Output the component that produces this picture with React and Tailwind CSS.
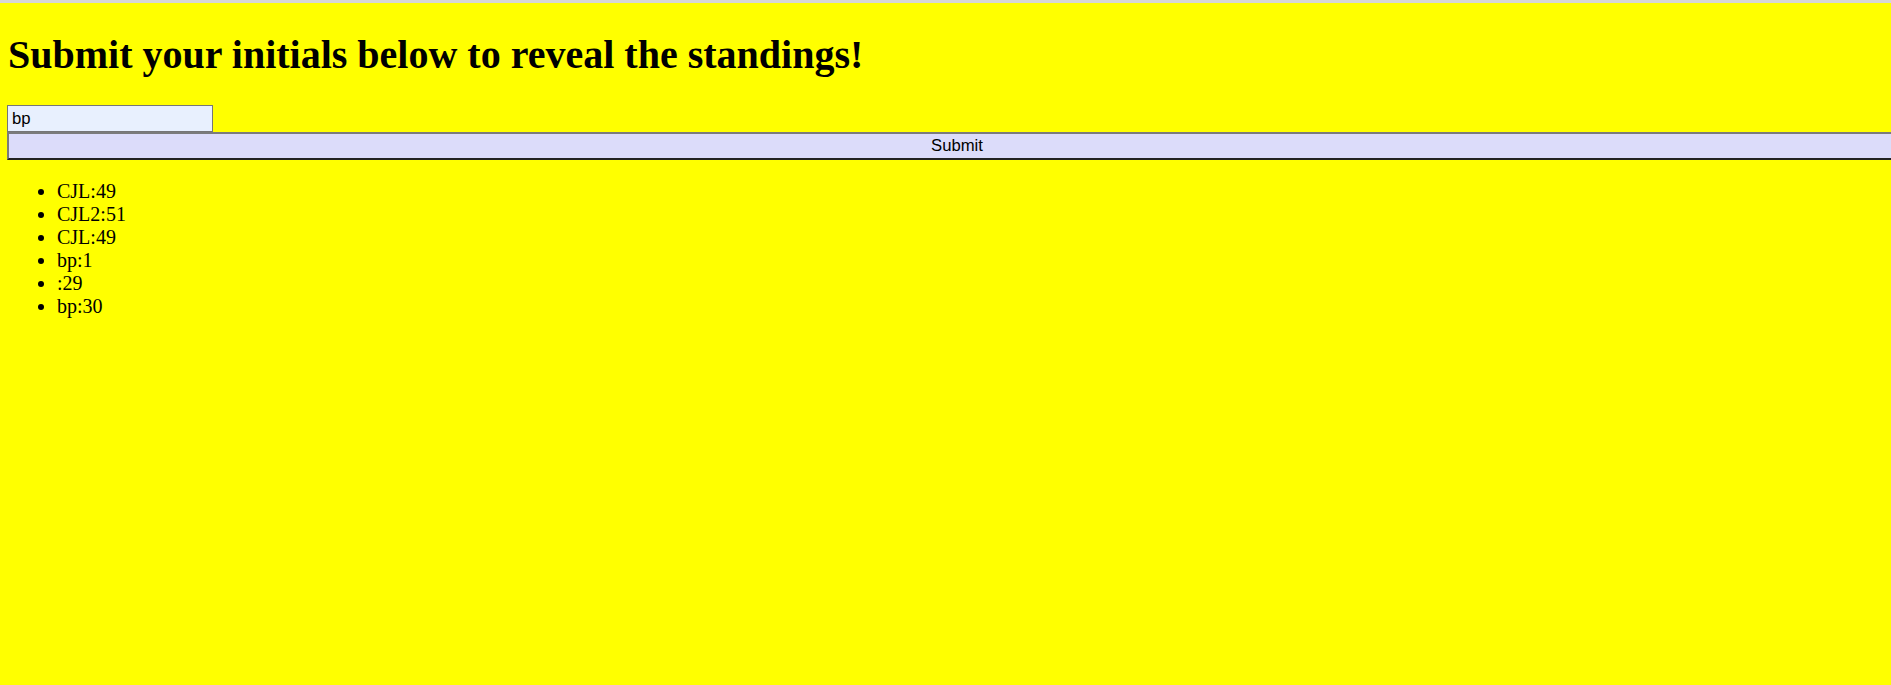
import React from "react";

const standings = [
  { name: "CJL", score: 49 },
  { name: "CJL2", score: 51 },
  { name: "CJL", score: 49 },
  { name: "bp", score: 1 },
  { name: "", score: 29 },
  { name: "bp", score: 30 },
];

const App = () => {
  return (
    <div className="min-h-screen overflow-hidden bg-[#ffff00] font-['Liberation_Serif',serif] text-black">
      {/* top strip */}
      <div className="h-[3px] bg-[#d6d6d6]" />

      <div className="pl-[7px]">
        <h1 className="pt-[29px] pl-px text-[40px] font-bold leading-[46px]">
          Submit your initials below to reveal the standings!
        </h1>

        <form className="mt-[27px]" onSubmit={(e) => e.preventDefault()}>
          <input
            type="text"
            defaultValue="bp"
            className="block h-[27px] w-[206px] border border-[#767676] bg-[#e8f0fe] px-[4px] font-['Liberation_Sans',sans-serif] text-[16.7px] text-black outline-none"
          />
          <button
            type="submit"
            className="flex h-[28px] w-[calc(100%+16px)] items-center justify-center border-t-2 border-l-2 border-b-2 border-r-2 border-t-[#7b7b7b] border-l-[#7b7b7b] border-b-[#222222] border-r-[#222222] bg-[#dcdcfa] font-['Liberation_Sans',sans-serif] text-[16.7px] text-black"
          >
            Submit
          </button>
        </form>

        <ul className="mt-[20px] list-disc pl-[50px] text-[20px] leading-[23px]">
          {standings.map((s, i) => (
            <li key={i}>
              {s.name}:{s.score}
            </li>
          ))}
        </ul>
      </div>
    </div>
  );
};

export default App;
